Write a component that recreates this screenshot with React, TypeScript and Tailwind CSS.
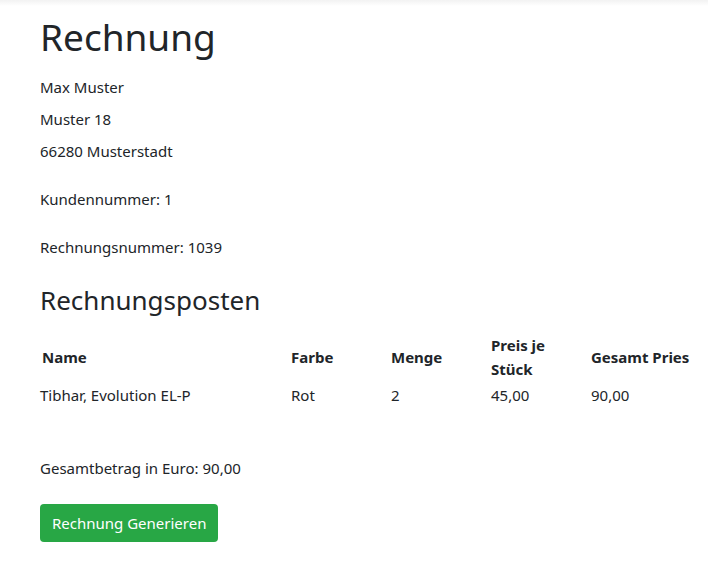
import React from "react";

export default function App() {
  return (
    <div className="relative min-h-[568px] w-full bg-white text-[#212529] font-['Noto_Sans',_'Open_Sans',_sans-serif]">
      <div className="absolute left-0 right-0 top-0 h-[6px] bg-gradient-to-b from-[#f2f2f2] to-white" />
      <div className="relative px-10 pt-[13px]">
        <h1 className="text-[37px] font-normal leading-[48px]">Rechnung</h1>
        <div className="mt-[14px] flex flex-col gap-2 text-[15px] leading-6">
          <p>Max Muster</p>
          <p>Muster 18</p>
          <p>66280 Musterstadt</p>
        </div>
        <p className="mt-6 text-[15px] leading-6">Kundennummer: 1</p>
        <p className="mt-6 text-[15px] leading-6">Rechnungsnummer: 1039</p>
        <h2 className="mt-[22px] text-[26px] font-normal leading-[38px]">Rechnungsposten</h2>
        <table className="mt-[14px] w-[668px] table-fixed border-collapse text-[15px] leading-6">
          <colgroup>
            <col className="w-[251px]" />
            <col className="w-[100px]" />
            <col className="w-[100px]" />
            <col className="w-[100px]" />
            <col className="w-[117px]" />
          </colgroup>
          <thead>
            <tr className="align-middle">
              <th className="p-0 pl-[2px] text-left font-bold">Name</th>
              <th className="p-0 text-left font-bold">Farbe</th>
              <th className="p-0 text-left font-bold">Menge</th>
              <th className="p-0 pr-6 text-left font-bold">Preis je Stück</th>
              <th className="p-0 text-left font-bold">Gesamt Pries</th>
            </tr>
          </thead>
          <tbody>
            <tr>
              <td className="p-0 pt-[2px]">Tibhar, Evolution EL-P</td>
              <td className="p-0 pt-[2px]">Rot</td>
              <td className="p-0 pt-[2px]">2</td>
              <td className="p-0 pt-[2px]">45,00</td>
              <td className="p-0 pt-[2px]">90,00</td>
            </tr>
          </tbody>
        </table>
        <p className="mt-[49px] text-[15px] leading-6">Gesamtbetrag in Euro: 90,00</p>
        <button className="mt-6 h-[38px] rounded-[4px] bg-[#28a745] px-3 text-[15px] leading-6 text-white">
          Rechnung Generieren
        </button>
      </div>
    </div>
  );
}
